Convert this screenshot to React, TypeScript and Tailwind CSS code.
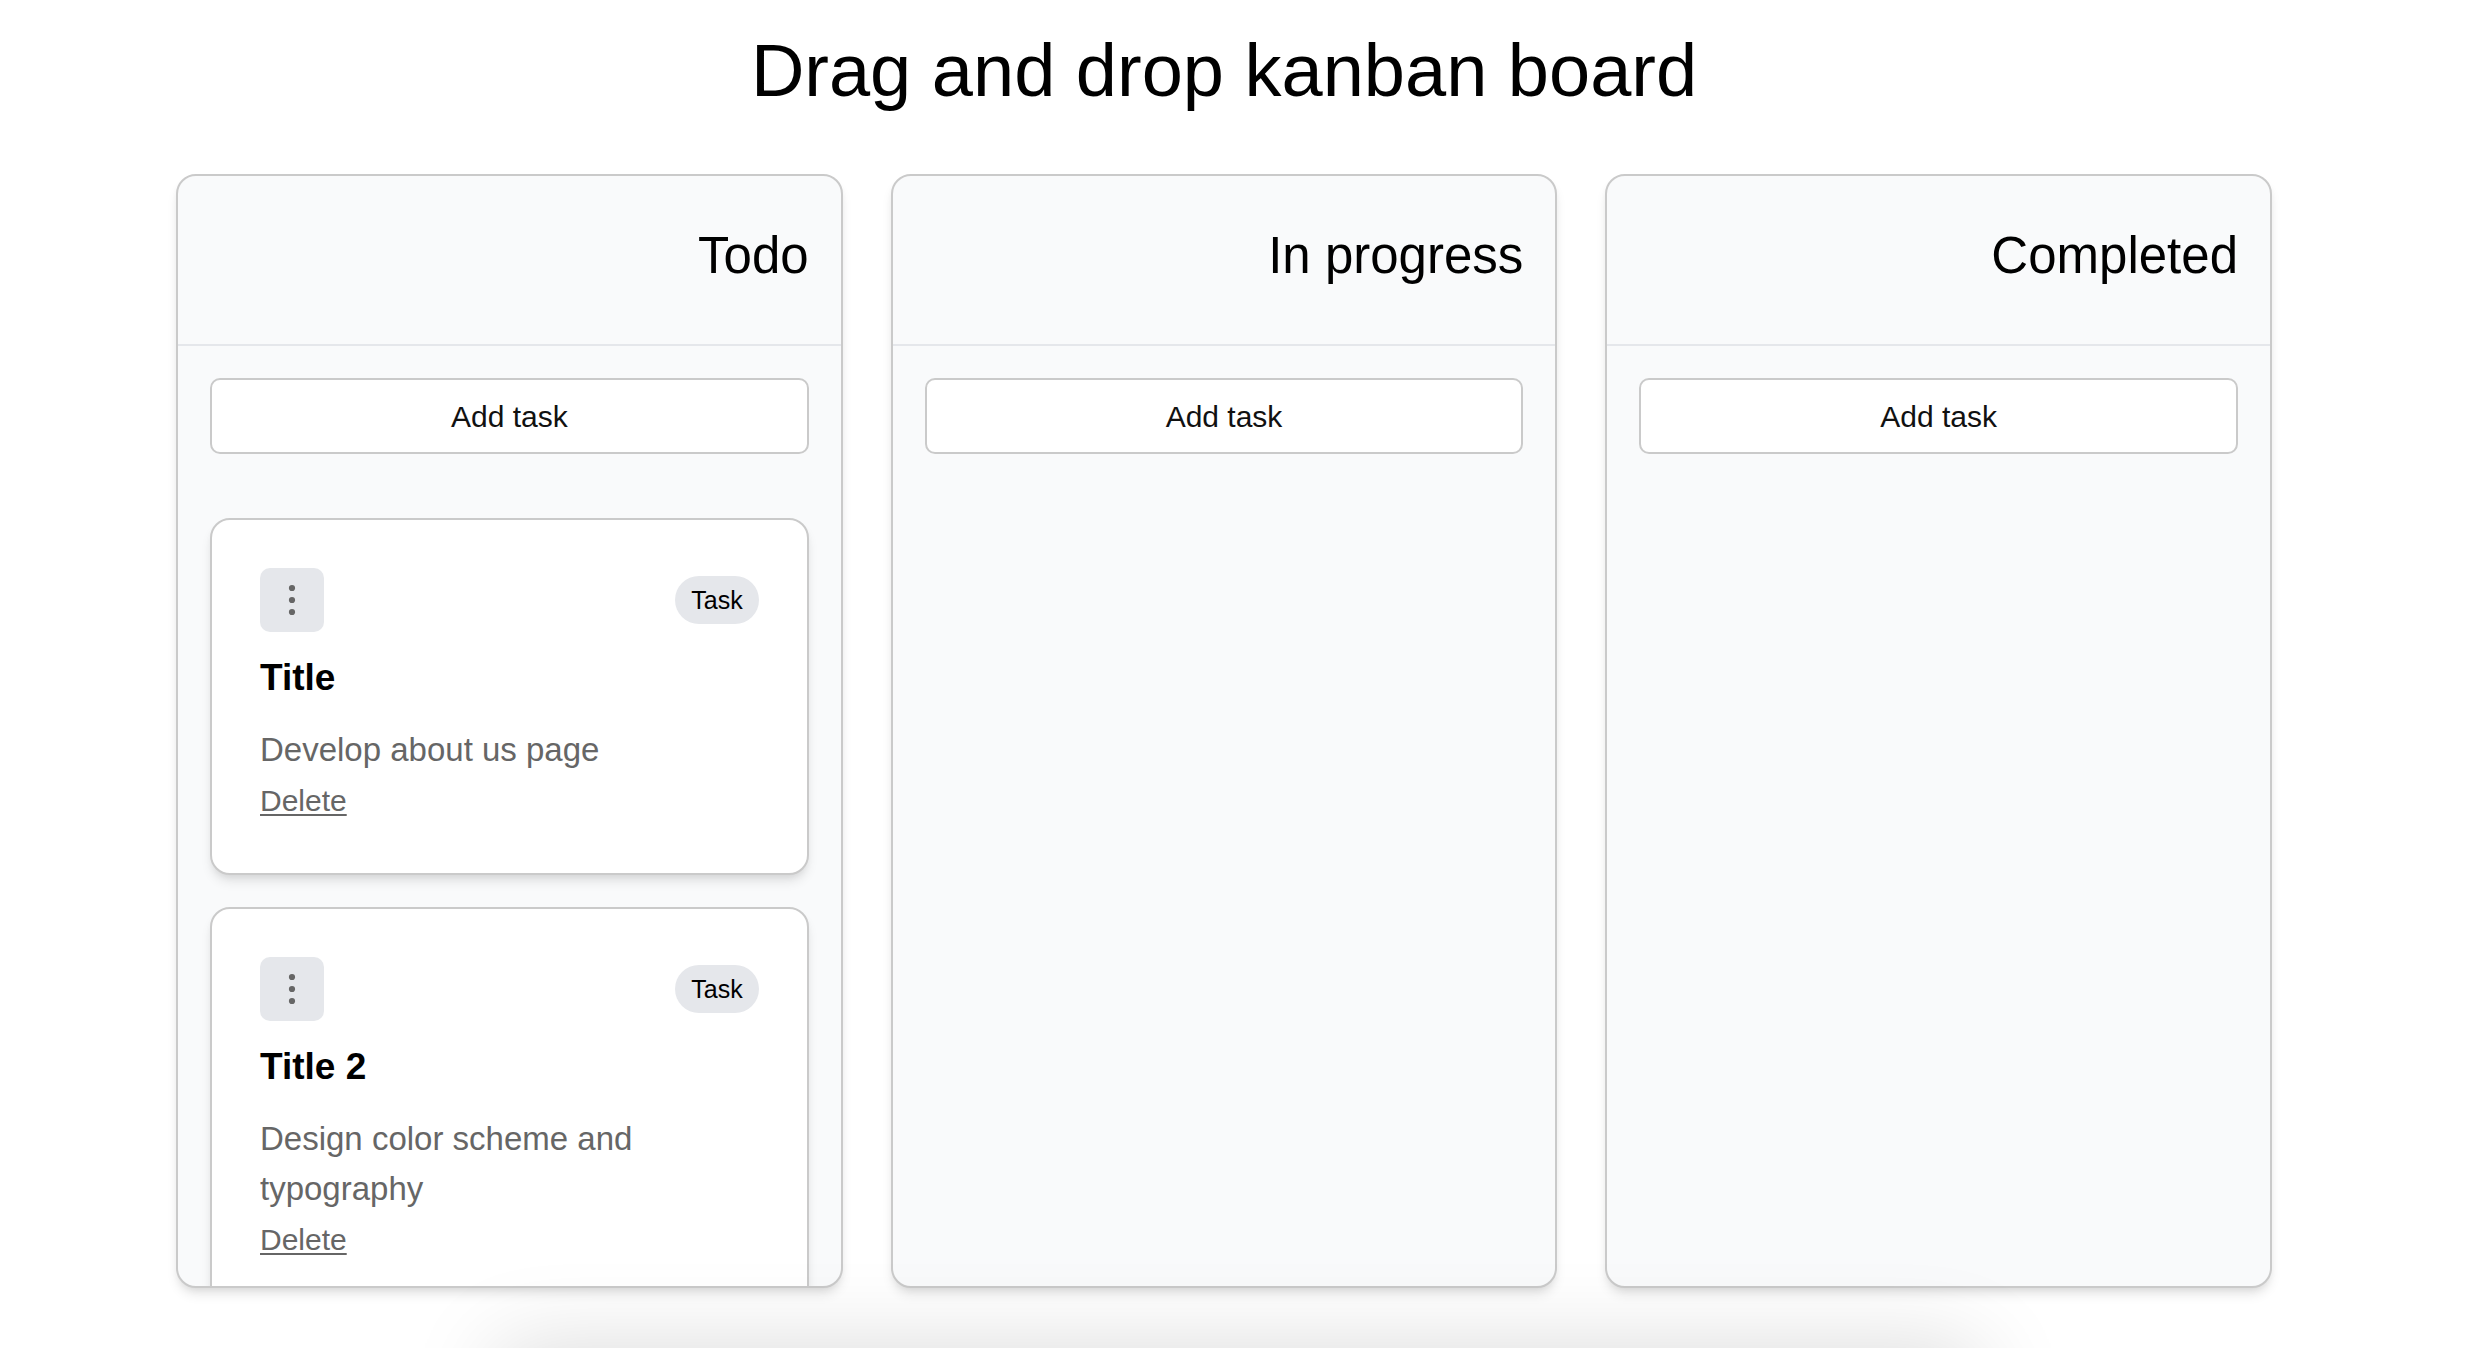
type Task = { title: string; description: string };
type Column = { name: string; tasks: Task[] };

const columns: Column[] = [
  {
    name: "Todo",
    tasks: [
      { title: "Title", description: "Develop about us page" },
      { title: "Title 2", description: "Design color scheme and typography" },
    ],
  },
  { name: "In progress", tasks: [] },
  { name: "Completed", tasks: [] },
];

const cardShadow =
  "shadow-[0_8px_12px_-2px_rgba(0,0,0,0.1),0_4px_8px_-4px_rgba(0,0,0,0.1)]";

function TaskCard({ title, description }: Task) {
  return (
    <article
      className={`rounded-[20px] border-2 border-[#cacaca] bg-white p-12 ${cardShadow}`}
    >
      <div className="flex items-center justify-between">
        <button
          type="button"
          aria-label={`Options for ${title}`}
          className="flex size-16 items-center justify-center rounded-[10px] bg-[#e5e7eb] text-[#666]"
        >
          <svg viewBox="0 0 32 32" className="size-8" fill="currentColor" aria-hidden="true">
            <circle cx="16" cy="4" r="3.1" />
            <circle cx="16" cy="16" r="3.1" />
            <circle cx="16" cy="28" r="3.1" />
          </svg>
        </button>
        <span className="rounded-full bg-[#e5e7eb] px-4 text-[25px] leading-[48px]">Task</span>
      </div>
      <h3 className="mt-4 mb-[17px] text-[37px] leading-[60px] font-bold">{title}</h3>
      <div className="text-[33px] leading-[50px] text-[#666]">
        <p>{description}</p>
        <button
          type="button"
          className="text-[30px] leading-[40px] underline decoration-2 underline-offset-[3px]"
        >
          Delete
        </button>
      </div>
    </article>
  );
}

function BoardColumn({ name, tasks }: Column) {
  return (
    <section
      className={`flex h-full min-w-0 flex-col overflow-hidden rounded-[20px] border-2 border-[#cacaca] bg-gray-50 ${cardShadow}`}
    >
      <header className="shrink-0 border-b-2 border-gray-200 px-8 pt-10 pb-12">
        <h2 className="text-right text-[51px] leading-[80px]">{name}</h2>
      </header>
      <div className="shrink-0 p-8">
        <button
          type="button"
          className="h-[76px] w-full rounded-[10px] border-2 border-[#cacaca] bg-white text-[30px] text-[#111]"
        >
          Add task
        </button>
      </div>
      <div className="flex min-h-0 flex-1 flex-col gap-8 overflow-y-auto p-8 [scrollbar-width:none]">
        {tasks.map((task) => (
          <TaskCard key={task.title} {...task} />
        ))}
      </div>
    </section>
  );
}

export default function App() {
  return (
    <div className="h-screen overflow-hidden bg-white pr-10 font-['Liberation_Sans',Arial,sans-serif] text-black">
      <main className="mx-auto flex h-full max-w-[2096px] flex-col pt-6 pb-[60px]">
        <h1 className="mb-14 text-center text-[74px] leading-[94px]">
          Drag and drop kanban board
        </h1>
        <div className="grid min-h-0 flex-1 grid-cols-3 gap-12">
          {columns.map((column) => (
            <BoardColumn key={column.name} {...column} />
          ))}
        </div>
      </main>
      <div
        aria-hidden="true"
        className="pointer-events-none fixed top-full right-[20.5%] left-[20%] h-40 shadow-[0_0_90px_rgba(0,0,0,0.15)]"
      />
    </div>
  );
}
